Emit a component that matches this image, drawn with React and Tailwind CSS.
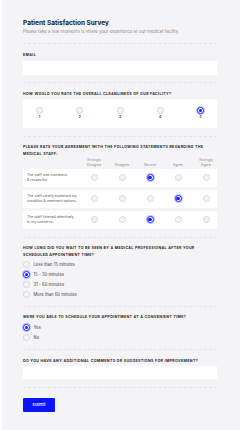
import React, { useState } from "react";

const Radio = ({ checked, onClick }) => (
  <button
    type="button"
    onClick={onClick}
    className={
      checked
        ? "flex h-[7px] w-[7px] shrink-0 items-center justify-center rounded-full border border-[#1f2bff] bg-white shadow-[0_0_0_1px_rgba(60,80,255,0.35)]"
        : "h-[7px] w-[7px] shrink-0 rounded-full border border-[#d6d6dc] bg-[#f5f5f7]"
    }
  >
    {checked && <span className="block h-[3.5px] w-[3.5px] rounded-full bg-[#1a1aff]" />}
  </button>
);

const Label = ({ children }) => (
  <p className="text-[3.6px] font-bold uppercase leading-[7px] tracking-[0.1em] text-[#1f1f1f]">
    {children}
  </p>
);

const Divider = () => <div className="border-t border-dashed border-[#e4e4e8]" />;

const statements = [
  ["The staff was courteous", "& respectful."],
  ["The staff clearly explained my", "condition & treatment options."],
  ["The staff listened attentively", "to my concerns."],
];
const columns = [
  ["Strongly", "Disagree"],
  ["", "Disagree"],
  ["", "Neutral"],
  ["", "Agree"],
  ["Strongly", "Agree"],
];
const waitOptions = ["Less than 15 minutes", "15 - 30 minutes", "31 - 60 minutes", "More than 60 minutes"];

export default function App() {
  const [rating, setRating] = useState(5);
  const [matrix, setMatrix] = useState([2, 3, 2]);
  const [wait, setWait] = useState(1);
  const [onTime, setOnTime] = useState("Yes");

  return (
    <div className="min-h-[430px] bg-white pl-[2px]" style={{ fontFamily: "Inter, 'Noto Sans', sans-serif" }}>
      <div className="min-h-[430px] bg-[#f4f4f6] pb-[20px] pl-[21px] pr-[23px] pt-[19px]">
        <h1 className="text-[6.5px] font-bold leading-[9px] text-[#1a1a1a]">Patient Satisfaction Survey</h1>
        <p className="mt-[1px] text-[4.4px] leading-[6px] text-[#8a8a90]">
          Please take a few moments to share your experience at our medical facility.
        </p>

        <div className="mt-[8px]">
          <Divider />
        </div>

        <div className="pt-[8px] pb-[7px]">
          <Label>Email</Label>
          <input type="email" className="mt-[1.5px] block h-[14px] w-full rounded-[1px] bg-white px-[3px] text-[4px] outline-none" />
        </div>
        <Divider />

        <div className="pt-[8px] pb-[7.5px]">
          <Label>How would you rate the overall cleanliness of our facility?</Label>
          <div className="mt-[1.5px] flex h-[29px] items-center justify-between rounded-[1px] bg-white px-[13px]">
            {[1, 2, 3, 4, 5].map((n) => (
              <div key={n} className="flex w-[7px] flex-col items-center gap-[1px]">
                <Radio checked={rating === n} onClick={() => setRating(n)} />
                <span className="text-[3.5px] font-semibold leading-[5px] text-[#333]">{n}</span>
              </div>
            ))}
          </div>
        </div>
        <Divider />

        <div className="pt-[7px] pb-[8px]">
          <Label>Please rate your agreement with the following statements regarding the medical staff:</Label>
          <div className="grid grid-cols-[1fr_repeat(5,22px)] gap-x-[6px] text-[3.5px] leading-[4.8px] text-[#8a8a90]">
            <div />
            {columns.map((c, i) => (
              <div key={i} className="flex h-[10px] flex-col items-center justify-end whitespace-nowrap text-center">
                {c[0] && <span>{c[0]}</span>}
                <span>{c[1]}</span>
              </div>
            ))}
          </div>
          <div className="mt-[1px] flex flex-col gap-[3px]">
            {statements.map((s, r) => (
              <div key={r} className="grid h-[18px] grid-cols-[1fr_repeat(5,22px)] items-center gap-x-[6px] rounded-[1px] bg-white">
                <div className="whitespace-nowrap pl-[4px] text-[3.5px] leading-[5px] text-[#555]">
                  <div>{s[0]}</div>
                  <div>{s[1]}</div>
                </div>
                {columns.map((_, c) => (
                  <div key={c} className="flex justify-center">
                    <Radio
                      checked={matrix[r] === c}
                      onClick={() => setMatrix(matrix.map((v, i) => (i === r ? c : v)))}
                    />
                  </div>
                ))}
              </div>
            ))}
          </div>
        </div>
        <Divider />

        <div className="pt-[7px] pb-[8px]">
          <Label>How long did you wait to be seen by a medical professional after your scheduled appointment time?</Label>
          <div className="mt-[2px] flex flex-col gap-[3.3px]">
            {waitOptions.map((o, i) => (
              <div key={o} className="flex items-center gap-[3.5px] text-[4.2px] leading-[7px] text-[#444]">
                <Radio checked={wait === i} onClick={() => setWait(i)} />
                <span>{o}</span>
              </div>
            ))}
          </div>
        </div>
        <Divider />

        <div className="pt-[7px] pb-[8px]">
          <Label>Were you able to schedule your appointment at a convenient time?</Label>
          <div className="mt-[2.5px] flex flex-col gap-[3px]">
            {["Yes", "No"].map((o) => (
              <div key={o} className="flex items-center gap-[3.5px] text-[4.2px] leading-[7px] text-[#444]">
                <Radio checked={onTime === o} onClick={() => setOnTime(o)} />
                <span>{o}</span>
              </div>
            ))}
          </div>
        </div>
        <Divider />

        <div className="pt-[8px] pb-[7.5px]">
          <Label>Do you have any additional comments or suggestions for improvement?</Label>
          <textarea className="mt-[1.5px] block h-[13px] w-full resize-none rounded-[1px] bg-white px-[3px] text-[4px] outline-none" />
        </div>
        <Divider />

        <button
          type="submit"
          className="mt-[7px] h-[14px] w-[32px] rounded-[1px] bg-[#0a14ff] text-[4px] font-medium text-white"
        >
          Submit
        </button>
      </div>
    </div>
  );
}
